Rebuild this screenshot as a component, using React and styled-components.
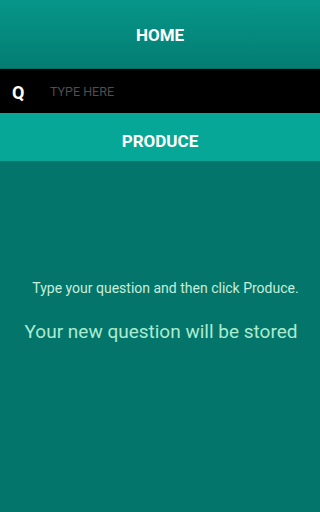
import React from "react";
import styled, { createGlobalStyle } from "styled-components";

const Global = createGlobalStyle`
  html, body { margin: 0; padding: 0; overflow: hidden; }
  body { background: #04756a; font-family: Roboto, "Liberation Sans", sans-serif; }
  * { box-sizing: border-box; }
`;

const Page = styled.div`
  display: flex;
  flex-direction: column;
  width: 100%;
  height: 512px;
  background: #04756a;
`;

const Header = styled.header`
  height: 69px;
  display: flex;
  align-items: center;
  justify-content: center;
  padding-top: 2px;
  background: linear-gradient(#069689, #047d73);
  border-bottom: 1px solid #046e65;
  color: #fff;
  font-weight: 700;
  font-size: 17px;
`;

const SearchBar = styled.div`
  height: 44px;
  display: flex;
  align-items: center;
  background: #000;
`;

const QLabel = styled.span`
  width: 50px;
  padding-left: 12px;
  color: #fff;
  font-weight: 700;
  font-size: 18px;
  padding-top: 2px;
`;

const Input = styled.input`
  flex: 1;
  min-width: 0;
  width: 0;
  background: transparent;
  border: none;
  outline: none;
  color: #fff;
  font-family: Roboto, "Liberation Sans", sans-serif;
  font-size: 12.5px;
  padding: 0;
  &::placeholder { color: #4e4e4e; }
`;

const ProduceButton = styled.button`
  height: 48px;
  width: 100%;
  border: none;
  background: #06a796;
  color: #fff;
  font-family: Roboto, "Liberation Sans", sans-serif;
  font-weight: 700;
  font-size: 17px;
  padding: 8px 0 0;
`;

const Body = styled.main`
  flex: 1;
  display: flex;
  flex-direction: column;
  align-items: center;
  padding-top: 119px;
`;

const Hint = styled.p`
  margin: 0;
  padding-left: 11px;
  color: #c6eedb;
  font-size: 14px;
  white-space: nowrap;
`;

const Stored = styled.p`
  margin: 24px 0 0;
  padding-left: 2px;
  color: #a9ecd0;
  font-size: 19px;
  white-space: nowrap;
`;

export default function App() {
  return (
    <Page>
      <Global />
      <Header>HOME</Header>
      <SearchBar>
        <QLabel>Q</QLabel>
        <Input placeholder="TYPE HERE" />
      </SearchBar>
      <ProduceButton>PRODUCE</ProduceButton>
      <Body>
        <Hint>Type your question and then click Produce.</Hint>
        <Stored>Your new question will be stored</Stored>
      </Body>
    </Page>
  );
}
